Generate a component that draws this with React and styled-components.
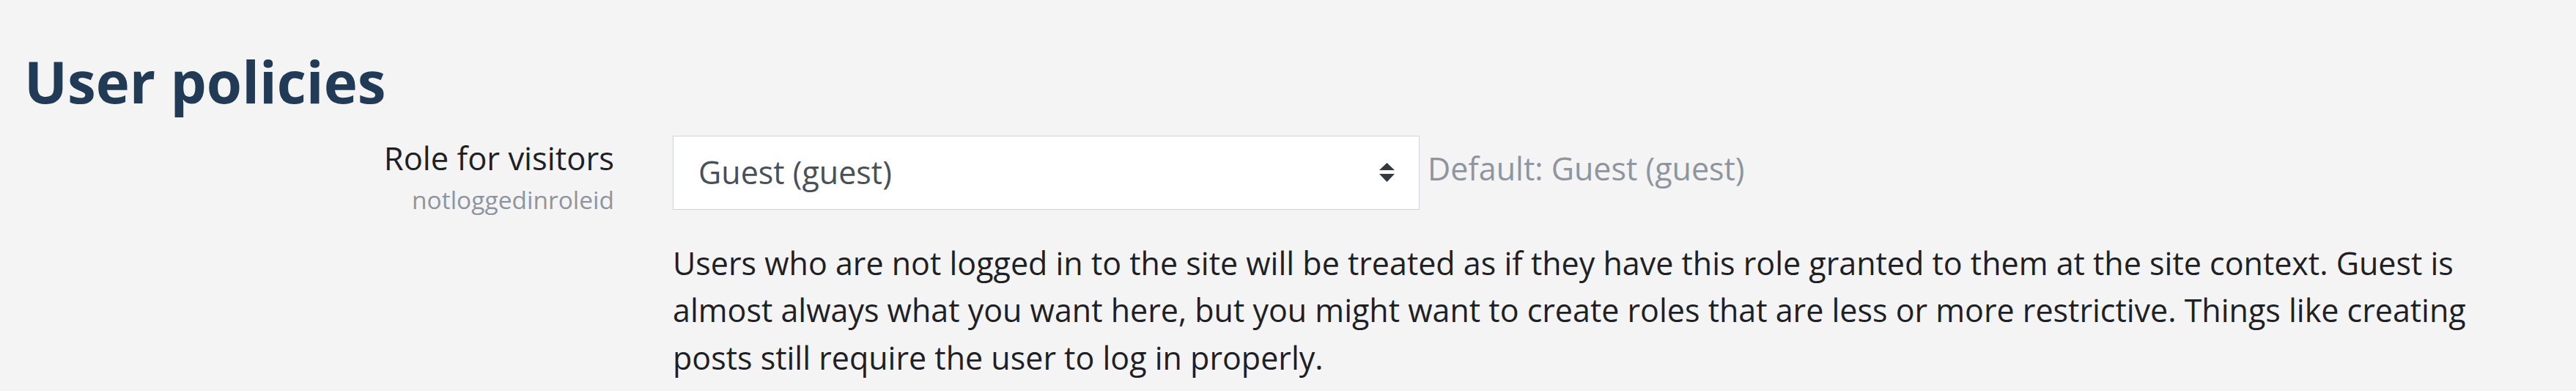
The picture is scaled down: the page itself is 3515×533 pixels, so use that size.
import React from 'react'
import styled, { createGlobalStyle } from 'styled-components'

const GlobalStyle = createGlobalStyle`
  html, body {
    margin: 0;
    padding: 0;
    background: #f4f4f4;
  }

  body {
    font-family: 'Open Sans', 'Noto Sans', sans-serif;
    color: #1d2125;
  }
`

const Page = styled.div`
  padding: 65px 75px 0 33px;
`

const Heading = styled.h3`
  margin: 0 0 25px;
  font-size: 78px;
  font-weight: 700;
  line-height: 1.2;
  color: #213a56;
`

const SettingRow = styled.div`
  display: grid;
  grid-template-columns: 805px 1fr;
  column-gap: 80px;
  align-items: start;
`

const LabelColumn = styled.div`
  display: flex;
  flex-direction: column;
  align-items: flex-end;
  text-align: right;
`

const Label = styled.label`
  font-size: 43.5px;
  line-height: 1.48;
`

const ShortName = styled.span`
  font-size: 33.5px;
  line-height: 1.45;
  color: #8f959e;
`

const ControlColumn = styled.div`
  display: flex;
  flex-direction: column;
  min-width: 0;
`

const ControlLine = styled.div`
  display: flex;
  align-items: flex-start;
  gap: 11px;
`

const SelectBox = styled.div`
  box-sizing: border-box;
  width: 1019px;
  height: 101px;
  margin-top: 1px;
  padding: 0 33px 0 34px;
  display: flex;
  align-items: center;
  justify-content: space-between;
  background: #fff;
  border: 1px solid #ced4da;
  font-size: 43px;
  line-height: 1.5;
  color: #495057;
`

const DefaultInfo = styled.span`
  padding-top: ${(p) => p.$offset}px;
  font-size: 43px;
  line-height: 1.5;
  color: #8f959e;
`

const Description = styled.p`
  margin: 41px 0 0;
  font-size: 43px;
  line-height: 1.5;
`

const SortArrows = () => (
  <svg width="21" height="26" viewBox="0 0 21 26" aria-hidden="true">
    <polygon points="10.5,0 21,10 0,10" fill="#343a40" />
    <polygon points="0,15 21,15 10.5,26" fill="#343a40" />
  </svg>
)

export default function App() {
  return (
    <>
      <GlobalStyle />
      <Page>
        <Heading>User policies</Heading>
        <SettingRow>
          <LabelColumn>
            <Label htmlFor="notloggedinroleid">Role for visitors</Label>
            <ShortName>notloggedinroleid</ShortName>
          </LabelColumn>
          <ControlColumn>
            <ControlLine>
              <SelectBox id="notloggedinroleid" role="combobox">
                <span>Guest (guest)</span>
                <SortArrows />
              </SelectBox>
              <DefaultInfo $offset={14}>Default: Guest (guest)</DefaultInfo>
            </ControlLine>
            <Description>
              Users who are not logged in to the site will be treated as if they have this role
              granted to them at the site context. Guest is almost always what you want here, but
              you might want to create roles that are less or more restrictive. Things like
              creating posts still require the user to log in properly.
            </Description>
          </ControlColumn>
        </SettingRow>
      </Page>
    </>
  )
}
